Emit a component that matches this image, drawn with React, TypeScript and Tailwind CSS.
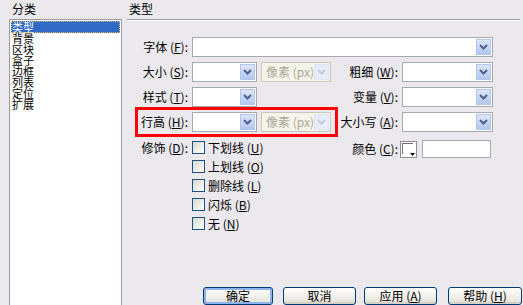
import React from "react";

const cjk = "[font-family:'Noto_Sans_CJK_SC','Noto_Sans',sans-serif]";

function Chevron({ disabled }: { disabled?: boolean }) {
  return (
    <svg width="9" height="6" viewBox="0 0 9 6">
      <path
        d="M1 1 L4.5 4.5 L8 1"
        fill="none"
        stroke={disabled ? "#c5cbd8" : "#4d6185"}
        strokeWidth="2"
      />
    </svg>
  );
}

function Combo({ w, disabled, text }: { w: string; disabled?: boolean; text?: string }) {
  return (
    <div
      className={`flex h-[20px] ${w} border p-[1px] ${
        disabled ? "border-[#c9c7ba] bg-[#f5f4ea]" : "border-[#a5a9b0] bg-white"
      }`}
    >
      <div className="flex-1 pl-[3px] text-[12px] leading-[16px] text-[#aca899]">{text}</div>
      <div
        className={`flex w-[15px] items-center justify-center border ${
          disabled
            ? "border-[#dde5f3] bg-[#e6edf9]"
            : "border-[#b3c5ec] bg-linear-to-b from-[#dce6fc] to-[#b3c7f0]"
        }`}
      >
        <Chevron disabled={disabled} />
      </div>
    </div>
  );
}

function Label({ w, children }: { w: string; children: React.ReactNode }) {
  return (
    <div className={`${w} shrink-0 text-right text-[12px] leading-[20px] text-black`}>{children}</div>
  );
}

function Check({ children }: { children: React.ReactNode }) {
  return (
    <div className="flex h-[13px] items-center">
      <div className="h-[13px] w-[13px] border border-[#1c5180] bg-linear-to-br from-[#d9d9d2] to-white" />
      <span className="ml-[3px] text-[12px] leading-[13px]">{children}</span>
    </div>
  );
}

function Btn({ w, ml, def, children }: { w: string; ml: string; def?: boolean; children: React.ReactNode }) {
  return (
    <div
      className={`${w} ${ml} flex h-[18px] items-center justify-center rounded-[3px] border border-[#003c74] bg-linear-to-b from-white to-[#e3e1d8] text-[12px] leading-[14px] ${
        def ? "shadow-[inset_0_0_0_2px_#8db2f0]" : "shadow-[inset_0_-2px_0_#d6d0c5]"
      }`}
    >
      {children}
    </div>
  );
}

const cats = ["类型", "背景", "区块", "盒子", "边框", "列表", "定位", "扩展"];

export default function App() {
  return (
    <div className={`flex h-[305px] w-[523px] overflow-hidden bg-[#ebe9ed] pl-[9px] text-black ${cjk}`}>
      {/* 分类 */}
      <div className="flex w-[113px] shrink-0 flex-col">
        <div className="h-[19px] pl-[3px] pt-[2px] text-[12px] leading-[14px]">分类</div>
        <div className="flex-1 border border-b-0 border-[#9d9da1] bg-white pl-[1px] pr-[1px] pt-[1px]">
          {cats.map((c, i) => (
            <div
              key={c}
              className={`pl-[1px] text-[11px] ${
                i === 0
                  ? "h-[12px] bg-[#316ac5] leading-[12px] text-white outline-1 -outline-offset-1 outline-dotted outline-[#d8c070]"
                  : "h-[11px] leading-[11px]"
              }`}
            >
              {c}
            </div>
          ))}
        </div>
      </div>

      {/* 类型 */}
      <div className="ml-[5px] flex flex-1 flex-col">
        <div className="h-[19px] pl-[2px] pt-[2px] text-[12px] leading-[14px]">类型</div>
        <div className="mr-[3px] h-[2px] border-t border-b border-t-[#a0a0a4] border-b-white" />

        <div className="flex flex-col gap-[5px] pt-[16px]">
          <div className="flex">
            <Label w="w-[61px]">
              字体 (<u>F</u>):
            </Label>
            <div className="ml-[4px]">
              <Combo w="w-[301px]" />
            </div>
          </div>

          <div className="flex">
            <Label w="w-[61px]">
              大小 (<u>S</u>):
            </Label>
            <div className="ml-[4px] flex gap-[4px]">
              <Combo w="w-[65px]" />
              <Combo w="w-[70px]" disabled text="像素 (px)" />
            </div>
            <Label w="w-[67px]">
              粗细 (<u>W</u>):
            </Label>
            <div className="ml-[4px]">
              <Combo w="w-[91px]" />
            </div>
          </div>

          <div className="flex">
            <Label w="w-[61px]">
              样式 (<u>T</u>):
            </Label>
            <div className="ml-[4px] w-[139px]">
              <Combo w="w-[65px]" />
            </div>
            <Label w="w-[67px]">
              变量 (<u>V</u>):
            </Label>
            <div className="ml-[4px]">
              <Combo w="w-[91px]" />
            </div>
          </div>

          <div className="relative flex">
            <Label w="w-[61px]">
              行高 (<u>H</u>):
            </Label>
            <div className="ml-[4px] flex gap-[4px]">
              <Combo w="w-[65px]" />
              <Combo w="w-[70px]" disabled text="像素 (px)" />
            </div>
            <Label w="w-[67px]">
              大小写 (<u>A</u>):
            </Label>
            <div className="ml-[4px]">
              <Combo w="w-[91px]" />
            </div>
            <div className="absolute left-[8px] top-[-5px] h-[30px] w-[203px] border-[3px] border-[#ff0000]" />
          </div>
        </div>

        <div className="mt-[8px] flex">
          <div className="flex w-[204px]">
            <div className="w-[61px] pt-[1px] text-right text-[12px] leading-[13px]">
              修饰 (<u>D</u>):
            </div>
            <div className="ml-[4px] flex flex-col gap-[6px] pt-[1px]">
              <Check>
                下划线 (<u>U</u>)
              </Check>
              <Check>
                上划线 (<u>O</u>)
              </Check>
              <Check>
                删除线 (<u>L</u>)
              </Check>
              <Check>
                闪烁 (<u>B</u>)
              </Check>
              <Check>
                无 (<u>N</u>)
              </Check>
            </div>
          </div>
          <div className="flex h-[18px] items-center">
            <div className="w-[67px] text-right text-[12px] leading-[18px]">
              颜色 (<u>C</u>):
            </div>
            <div className="relative ml-[2px] h-[17px] w-[17px] border border-[#8e8f94] bg-white">
              <div className="absolute left-[1px] top-[1px] h-[11px] w-[11px] border-l border-t border-[#6f6f6f]" />
              <svg className="absolute bottom-[1px] right-[1px]" width="5" height="3" viewBox="0 0 5 3">
                <path d="M0 0 H5 L2.5 3 Z" fill="#000" />
              </svg>
            </div>
            <div className="ml-[5px] h-[18px] w-[69px] border border-[#a5a9b0] bg-white" />
          </div>
        </div>

        <div className="flex-1" />

        <div className="flex pl-[76px]">
          <Btn w="w-[70px]" ml="ml-0" def>
            确定
          </Btn>
          <Btn w="w-[73px]" ml="ml-[10px]">
            取消
          </Btn>
          <Btn w="w-[73px]" ml="ml-[8px]">
            应用 (<u>A</u>)
          </Btn>
          <Btn w="w-[74px]" ml="ml-[11px]">
            帮助 (<u>H</u>)
          </Btn>
        </div>
      </div>
    </div>
  );
}
